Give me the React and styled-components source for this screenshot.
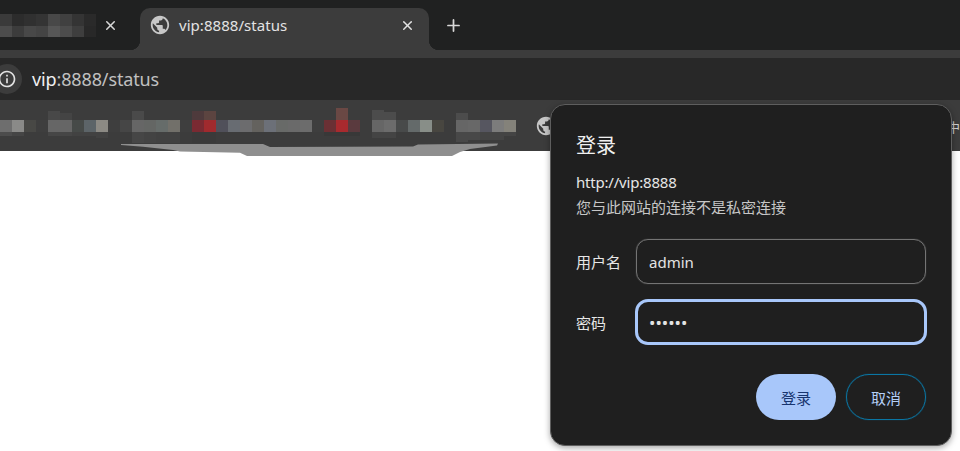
import React from "react";
import styled, { createGlobalStyle } from "styled-components";
import { MdPublic, MdInfoOutline } from "react-icons/md";
import { X, Plus } from "lucide-react";

const FONT = `"Noto Sans", "Noto Sans CJK SC", sans-serif`;

const GlobalStyle = createGlobalStyle`
  html, body {
    margin: 0;
    background: #fff;
    overflow: hidden;
  }
  * {
    box-sizing: border-box;
  }
`;

const Page = styled.div`
  position: relative;
  width: 960px;
  height: 451px;
  font-family: ${FONT};
  overflow: hidden;
`;

const TabStrip = styled.div`
  display: flex;
  align-items: flex-end;
  height: 50px;
  background: #202121;
`;

const BackgroundTab = styled.div`
  display: flex;
  align-items: center;
  justify-content: space-between;
  width: 140px;
  height: 42px;
  padding: 0 22px 8px 0;
  color: #d8d8d8;

  svg {
    flex: none;
  }
`;

const ActiveTab = styled.div`
  position: relative;
  display: flex;
  align-items: center;
  width: 289px;
  height: 42px;
  padding: 0 14px 8px 9px;
  background: #3c3c3c;
  border-radius: 10px 10px 0 0;
  color: #e3e3e3;

  svg {
    flex: none;
  }

  &::before,
  &::after {
    content: "";
    position: absolute;
    bottom: 0;
    width: 10px;
    height: 10px;
  }
  &::before {
    left: -10px;
    background: radial-gradient(circle at 0 0, transparent 10px, #3c3c3c 10.5px);
  }
  &::after {
    right: -10px;
    background: radial-gradient(circle at 100% 0, transparent 10px, #3c3c3c 10.5px);
  }
`;

const TabTitle = styled.span`
  flex: 1;
  margin-left: 8px;
  font-size: 15px;
  letter-spacing: 0.05px;
`;

const NewTab = styled.div`
  display: flex;
  align-items: center;
  justify-content: center;
  width: 48px;
  height: 42px;
  padding-bottom: 8px;
  color: #d8d8d8;
`;

const Toolbar = styled.div`
  padding-top: 8px;
  background: #3c3c3c;
`;

const AddressBar = styled.div`
  display: flex;
  align-items: center;
  height: 42px;
  background: #282828;
  font-size: 18px;
  letter-spacing: -0.13px;
`;

const InfoBadge = styled.div`
  display: flex;
  align-items: center;
  justify-content: center;
  flex: none;
  width: 30px;
  height: 30px;
  margin: 0 10px 0 -8px;
  border-radius: 50%;
  background: #3c3c3c;
  color: #e3e3e3;
`;

const Host = styled.span`
  color: #f0f0f0;
`;

const UrlRest = styled.span`
  color: #c0c0c0;
`;

const BookmarkBar = styled.div`
  position: relative;
  display: flex;
  align-items: center;
  height: 51px;
  padding-top: 1px;
  background: #3c3c3c;
  color: #c7c7c7;
`;

const Mosaic = styled.div`
  display: flex;
  flex: none;
  width: ${(p) => p.$width}px;
  margin-bottom: ${(p) => p.$lift || 0}px;
`;

const Cell = styled.div`
  flex: none;
  width: 12px;
  height: 12px;
  background: ${(p) => p.$c};
  box-shadow: ${(p) => {
    const parts = [];
    if (p.$top) parts.push(`0 -${p.$topH || 9}px 0 ${p.$top}`);
    if (p.$below) parts.push(`0 ${p.$belowH || 11}px 0 ${p.$below}`);
    return parts.length ? parts.join(", ") : "none";
  }};
`;

const BookmarkGlobe = styled.div`
  display: flex;
  margin-left: 19px;
`;

const ClippedLabel = styled.span`
  margin-left: auto;
  font-size: 13px;
  color: #cfcfcf;
`;

const Smudge = styled.svg`
  position: absolute;
  left: 0;
  top: 43px;
`;

const Dialog = styled.div`
  position: absolute;
  left: 550px;
  top: 104px;
  width: 402px;
  height: 342px;
  padding: 27px 25px 0;
  background: #1f1f1f;
  border: 1px solid #5e5e5e;
  border-radius: 15px;
  box-shadow: 0 2px 6px rgba(0, 0, 0, 0.35);
`;

const DialogTitle = styled.div`
  height: 28px;
  font-size: 20px;
  line-height: 28px;
  color: #f0f0f0;
`;

const Origin = styled.div`
  margin-top: 12px;
  font-size: 15px;
  line-height: 20px;
  letter-spacing: -0.2px;
  color: #e6e6e6;
`;

const Warning = styled.div`
  margin-top: 5px;
  font-size: 15px;
  line-height: 20px;
  color: #c7c7c7;
`;

const Form = styled.div`
  display: flex;
  flex-direction: column;
  gap: 15px;
  margin-top: 22px;
`;

const Row = styled.div`
  display: flex;
  align-items: center;
`;

const FieldLabel = styled.label`
  flex: none;
  width: 60px;
  font-size: 15px;
  color: #e6e6e6;
`;

const TextField = styled.input`
  flex: none;
  width: ${(p) => (p.$focused ? 292 : 290)}px;
  height: ${(p) => (p.$focused ? 46 : 45)}px;
  margin-left: ${(p) => (p.$focused ? -1 : 0)}px;
  padding: 0 ${(p) => (p.$focused ? 11 : 12)}px;
  background: transparent;
  border: ${(p) => (p.$focused ? "3px solid #a8c7fa" : "1px solid #747474")};
  box-shadow: ${(p) => (p.$focused ? "none" : "0 0 1px #747474")};
  border-radius: ${(p) => (p.$focused ? 13 : 12)}px;
  outline: none;
  font-family: ${FONT};
  font-size: ${(p) => (p.$focused ? 17 : 15)}px;
  color: #e3e3e3;
`;

const Actions = styled.div`
  display: flex;
  justify-content: flex-end;
  gap: 10px;
  margin-top: 29px;
`;

const Button = styled.button`
  width: 80px;
  height: 46px;
  padding: 0;
  border-radius: 23px;
  border: ${(p) => (p.$primary ? "none" : "1px solid #0a76a4")};
  box-shadow: ${(p) => (p.$primary ? "none" : "0 0 1px #0a76a4")};
  background: ${(p) => (p.$primary ? "#a8c7fa" : "transparent")};
  color: ${(p) => (p.$primary ? "#17356f" : "#b4cff8")};
  font-family: ${FONT};
  font-size: 15px;
`;

const tabCells = [
  ["#3a3a3a", "#4c4c4c"],
  ["#2c2c2c", "#3c3c3c"],
  ["#303030", "#484848"],
  ["#343434", "#444"],
  ["#484848", "#565656"],
  ["#404040", "#4c4c4c"],
  ["#343434", "#3e3e3e"],
  ["#2a2a2a", "#282828"],
];

// bookmark names are pixelated in the source, one entry per 12px block
const bookmarkCells = [
  { c: "#6e6e6e", below: "#4c4c4c", belowH: 4 },
  { c: "#8a8a88", below: "#454545", belowH: 4 },
  { c: "#484845" },
  { c: "#3e3e3e" },
  { c: "#666", top: "#484848", below: "#464646", belowH: 4 },
  { c: "#666", top: "#444", topH: 7, below: "#464646", belowH: 4 },
  { c: "#464a48", below: "#424242", belowH: 4 },
  { c: "#5c6468", below: "#424242", belowH: 4 },
  { c: "#8c8a84", below: "#424242", belowH: 6 },
  { c: "#3e3e3e" },
  { c: "#464646" },
  { c: "#666", top: "#4a4a4a", below: "#464646" },
  { c: "#646664", below: "#434343" },
  { c: "#666c6a", below: "#414141" },
  { c: "#72706a", below: "#414141" },
  { c: "#3e3e3e" },
  { c: "#7a2a32", top: "#4e3a3c", below: "#3a3a3a" },
  { c: "#a02a2e", top: "#5c4440", below: "#3a3a3a" },
  { c: "#50505a" },
  { c: "#686c72" },
  { c: "#6c6c6e" },
  { c: "#64625e" },
  { c: "#6c7078" },
  { c: "#686a68" },
  { c: "#6a6a6a" },
  { c: "#6c6c6c" },
  { c: "#3e3e3e" },
  { c: "#6a3034", below: "#383838", belowH: 4 },
  { c: "#a82a2e", top: "#6a4844", topH: 12, below: "#383838", belowH: 4 },
  { c: "#5a3a3e", below: "#383838", belowH: 4 },
  { c: "#3c3c3c" },
  { c: "#666", top: "#4c4c4c", topH: 10, below: "#444", belowH: 6 },
  { c: "#6c6c6c", top: "#4c4c4c", topH: 8, below: "#444", belowH: 6 },
  { c: "#484a4a" },
  { c: "#646a6a" },
  { c: "#888e88" },
  { c: "#484640" },
  { c: "#3c3c3c" },
  { c: "#666", top: "#4c4c4c", topH: 7, below: "#484848", belowH: 10 },
  { c: "#686868", below: "#484848", belowH: 8 },
  { c: "#565660", below: "#444", belowH: 8 },
  { c: "#7c7c7c", below: "#444", belowH: 8 },
  { c: "#84827a", below: "#444", belowH: 4 },
];

function App() {
  return (
    <Page>
      <GlobalStyle />
      <TabStrip>
        <BackgroundTab>
          <Mosaic $width={96} $lift={11}>
            {tabCells.map(([top, bottom], i) => (
              <Cell key={i} $c={top} $below={bottom} $belowH={11} />
            ))}
          </Mosaic>
          <X size={15} strokeWidth={2.4} />
        </BackgroundTab>
        <ActiveTab>
          <MdPublic size={22} color="#c7c7c7" />
          <TabTitle>vip:8888/status</TabTitle>
          <X size={15} strokeWidth={2.4} />
        </ActiveTab>
        <NewTab>
          <Plus size={19} strokeWidth={2.2} />
        </NewTab>
      </TabStrip>

      <Toolbar>
        <AddressBar>
          <InfoBadge>
            <MdInfoOutline size={20} />
          </InfoBadge>
          <span>
            <Host>vip</Host>
            <UrlRest>:8888/status</UrlRest>
          </span>
        </AddressBar>
      </Toolbar>

      <BookmarkBar>
        <Mosaic $width={516}>
          {bookmarkCells.map((cell, i) => (
            <Cell
              key={i}
              $c={cell.c}
              $top={cell.top}
              $topH={cell.topH}
              $below={cell.below}
              $belowH={cell.belowH}
            />
          ))}
        </Mosaic>
        <BookmarkGlobe>
          <MdPublic size={22} />
        </BookmarkGlobe>
        <ClippedLabel>中</ClippedLabel>
        <Smudge width="520" height="14" viewBox="0 143 520 14">
          <polygon
            fill="#8f8f8f"
            points="121,144 263,144 270,147 413,146.5 418,144.5 498,143.5 497,145.5 470,149 460,152 452,156 247,156 240,152.7 180,151.5 173,150 143,146.7 121,145"
          />
        </Smudge>
      </BookmarkBar>

      <Dialog>
        <DialogTitle>登录</DialogTitle>
        <Origin>http://vip:8888</Origin>
        <Warning>您与此网站的连接不是私密连接</Warning>
        <Form>
          <Row>
            <FieldLabel>用户名</FieldLabel>
            <TextField type="text" value="admin" readOnly />
          </Row>
          <Row>
            <FieldLabel>密码</FieldLabel>
            <TextField type="password" value="123456" readOnly $focused />
          </Row>
        </Form>
        <Actions>
          <Button $primary>登录</Button>
          <Button>取消</Button>
        </Actions>
      </Dialog>
    </Page>
  );
}

export default App;
